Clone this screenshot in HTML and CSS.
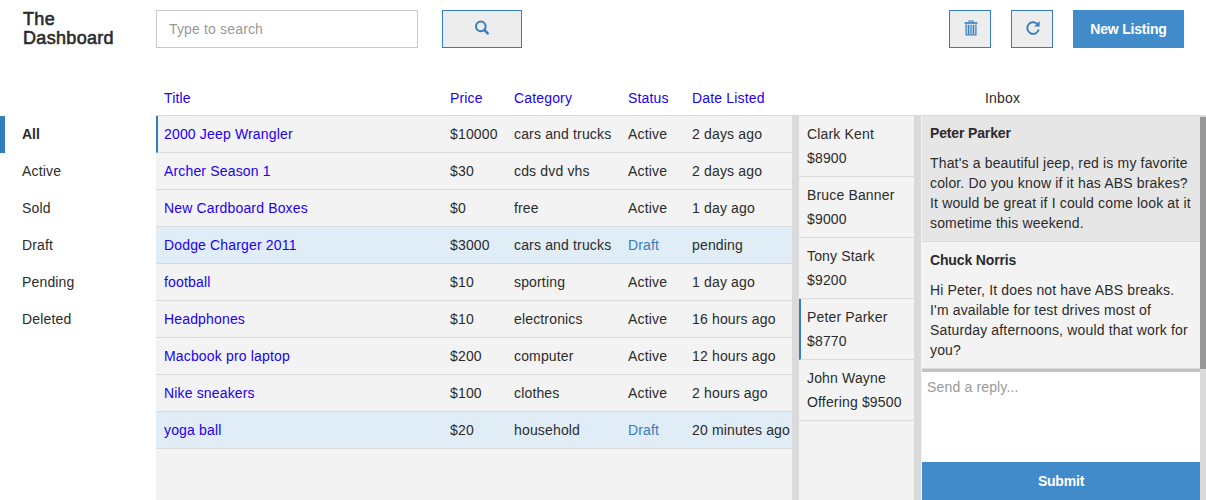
FILE: index.html
```html
<!DOCTYPE html>
<html lang="en">
<head>
<meta charset="utf-8">
<title>The Dashboard</title>
<link rel="stylesheet" href="styles.css">
</head>
<body>
<header class="topbar">
  <h1 class="brand">The<br>Dashboard</h1>
  <input class="search" type="text" placeholder="Type to search">
  <button class="btn btn-search" aria-label="Search"><svg width="16" height="16" viewBox="0 0 16 16"><circle cx="6.8" cy="6.4" r="4.8" fill="none" stroke="currentColor" stroke-width="2"/><path d="M10.3 9.9l3.4 3.4" stroke="currentColor" stroke-width="2.6" stroke-linecap="round"/></svg></button>
  <div class="actions">
    <button class="btn btn-icon" aria-label="Delete"><svg width="14" height="16" viewBox="0 0 14 16" fill="none" stroke="currentColor"><path d="M5 2.5V1h4v1.5" stroke-width="1.1"/><path d="M.5 3h13" stroke-width="1.6"/><path d="M2 4.5h10V15H2z" fill="currentColor" fill-opacity=".3" stroke="none"/><path d="M2 4.5V15h10V4.5" stroke-width="1.1"/><path d="M4.5 5v9.5M7 5v9.5M9.5 5v9.5" stroke-width="1"/></svg></button>
    <button class="btn btn-icon" aria-label="Refresh"><svg width="16" height="16" viewBox="0 0 16 16"><path d="M12.2 4A5.8 5.8 0 1 0 13.7 9.5" fill="none" stroke="currentColor" stroke-width="1.9"/><path d="M14.6 1v5.4H9.2z" fill="currentColor"/></svg></button>
    <button class="btn-primary btn-new">New Listing</button>
  </div>
</header>
<main class="layout">
  <nav class="filters">
    <a class="filter active">All</a>
    <a class="filter">Active</a>
    <a class="filter">Sold</a>
    <a class="filter">Draft</a>
    <a class="filter">Pending</a>
    <a class="filter">Deleted</a>
  </nav>
  <section class="listings">
    <div class="row head"><span>Title</span><span>Price</span><span>Category</span><span>Status</span><span>Date Listed</span></div>
    <div class="row selected"><a>2000 Jeep Wrangler</a><span>$10000</span><span>cars and trucks</span><span>Active</span><span>2 days ago</span></div>
    <div class="row"><a>Archer Season 1</a><span>$30</span><span>cds dvd vhs</span><span>Active</span><span>2 days ago</span></div>
    <div class="row"><a>New Cardboard Boxes</a><span>$0</span><span>free</span><span>Active</span><span>1 day ago</span></div>
    <div class="row draft"><a>Dodge Charger 2011</a><span>$3000</span><span>cars and trucks</span><span class="status">Draft</span><span>pending</span></div>
    <div class="row"><a>football</a><span>$10</span><span>sporting</span><span>Active</span><span>1 day ago</span></div>
    <div class="row"><a>Headphones</a><span>$10</span><span>electronics</span><span>Active</span><span>16 hours ago</span></div>
    <div class="row"><a>Macbook pro laptop</a><span>$200</span><span>computer</span><span>Active</span><span>12 hours ago</span></div>
    <div class="row"><a>Nike sneakers</a><span>$100</span><span>clothes</span><span>Active</span><span>2 hours ago</span></div>
    <div class="row draft"><a>yoga ball</a><span>$20</span><span>household</span><span class="status">Draft</span><span>20 minutes ago</span></div>
  </section>
  <section class="inbox">
    <h2 class="inbox-title">Inbox</h2>
    <div class="panes">
      <div class="offers">
        <div class="offer">Clark Kent<br>$8900</div>
        <div class="offer">Bruce Banner<br>$9000</div>
        <div class="offer">Tony Stark<br>$9200</div>
        <div class="offer current">Peter Parker<br>$8770</div>
        <div class="offer">John Wayne<br>Offering $9500</div>
      </div>
      <div class="thread">
        <article class="message incoming"><h3>Peter Parker</h3><p>That's a beautiful jeep, red is my favorite<br>color. Do you know if it has ABS brakes?<br>It would be great if I could come look at it<br>sometime this weekend.</p></article>
        <article class="message"><h3>Chuck Norris</h3><p>Hi Peter, It does not have ABS breaks.<br>I'm available for test drives most of<br>Saturday afternoons, would that work for<br>you?</p></article>
        <textarea class="reply" placeholder="Send a reply..."></textarea>
        <button class="btn-primary btn-submit">Submit</button>
      </div>
      <div class="scrollbar"><div class="thumb"></div></div>
    </div>
  </section>
</main>
</body>
</html>
```

FILE: styles.css
```css
* { box-sizing: border-box; }
body {
  margin: 0;
  height: 500px;
  overflow: hidden;
  background: #fff;
  color: #2b2b2b;
  font: 14px/20px "Liberation Sans", Arial, sans-serif;
  letter-spacing: .16px;
  display: flex;
  flex-direction: column;
}
h1, h2, h3, p { margin: 0; }
button, input, textarea { font: inherit; letter-spacing: inherit; border-radius: 0; margin: 0; }
svg { display: block; }

.topbar { display: flex; align-items: flex-start; height: 79px; padding: 10px 22px 0 23px; }
.brand {
  width: 133px;
  font-size: 18px;
  line-height: 19px;
  font-weight: 400;
  letter-spacing: .32px;
  -webkit-text-stroke: .6px currentColor;
}
.search { width: 262px; height: 38px; padding: 0 12px; border: 1px solid #c8c8c8; background: #fff; outline: 0; }
.search::placeholder { color: #999; }
.btn {
  display: flex;
  align-items: center;
  justify-content: center;
  height: 38px;
  padding: 0 0 2px;
  border: 1px solid #357ebd;
  background: #ededed;
  color: #357ebd;
}
.btn-search { width: 80px; margin-left: 24px; }
.actions { display: flex; gap: 20px; margin-left: auto; }
.btn-icon { width: 42px; padding-left: 1px; }
.btn-primary { height: 38px; padding: 0; border: 0; background: #428bca; color: #fff; font-weight: 700; letter-spacing: -.2px; }
.btn-new { width: 111px; }

.layout { flex: 1; display: grid; grid-template-columns: 156px 636px 414px; min-height: 0; }
.filters { padding-top: 37px; }
.filter { display: block; height: 37px; padding: 8px 0 0 22px; }
.filter.active { padding-left: 17px; border-left: 5px solid #357ebd; font-weight: 700; letter-spacing: 0; }

.listings { background: #f3f3f3; }
.row {
  display: grid;
  grid-template-columns: 286px 64px 114px 64px 1fr;
  height: 37px;
  padding: 8px 0 0 8px;
  border-bottom: 1px solid #dadada;
  white-space: nowrap;
}
.row a, .head { color: #20e; }
.row.head { padding-top: 9px; background: #fff; }
.row.selected { padding-left: 6px; border-left: 2px solid #357ebd; }
.row.draft { background: #e0edf7; }
.status { color: #357ebd; }

.inbox { display: flex; flex-direction: column; min-height: 0; }
.inbox-title { height: 37px; padding: 9px 0 0 193px; font: inherit; border-bottom: 1px solid #dadada; }
.panes { flex: 1; display: grid; grid-template-columns: 129px 279px 6px; min-height: 0; }
.offers { background: #f3f3f3; border: solid #dadada; border-width: 0 7px; white-space: nowrap; }
.offer { height: 61px; padding: 6px 0 0 8px; line-height: 24px; border-bottom: 1px solid #dadada; }
.offer.current { padding-left: 6px; border-left: 2px solid #357ebd; }
.thread { display: flex; flex-direction: column; border-left: 1px solid #f3f3f3; }
.message { height: 127px; padding: 8px 0 0 8px; background: #f3f3f3; border-bottom: 1px solid #dadada; white-space: nowrap; }
.message.incoming { height: 126px; padding-top: 7px; background: #e6e6e6; }
.message h3 { margin-bottom: 10px; font: inherit; font-weight: 700; letter-spacing: -.15px; }
.reply { flex: 1; padding: 5px; border: 0; border-top: 3px solid #c2c2c2; background: #fff; resize: none; outline: 0; }
.reply::placeholder { color: #999; }
.btn-submit { width: 100%; }
.scrollbar { background: #dadada; padding-top: 1px; }
.thumb { height: 252px; background: #979797; }
```
